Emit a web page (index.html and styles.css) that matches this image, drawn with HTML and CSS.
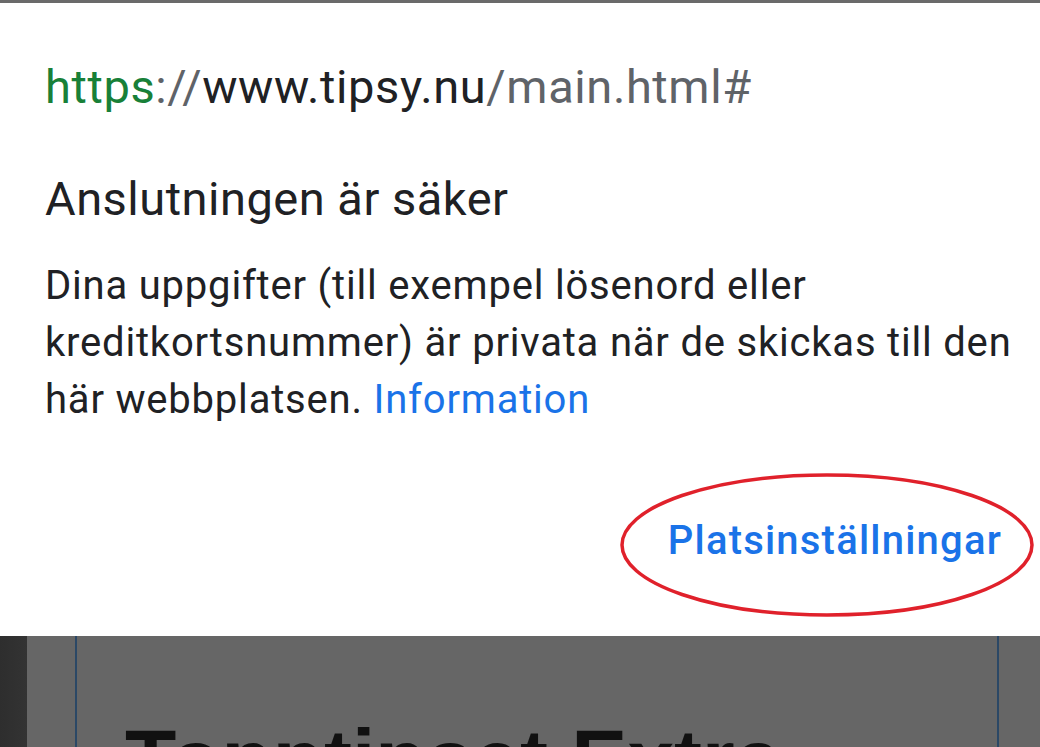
FILE: index.html
```html
<!DOCTYPE html>
<html lang="sv">
<head>
<meta charset="utf-8">
<title>Anslutningen är säker</title>
<link rel="stylesheet" href="styles.css">
</head>
<body>
<div class="topbar"></div>
<div class="dialog">
  <div class="url"><span class="scheme">https</span><span class="muted">://</span><span class="host">www.tipsy.nu</span><span class="muted">/main.html#</span></div>
  <h1 class="title">Anslutningen är säker</h1>
  <p class="desc">Dina uppgifter (till exempel lösenord eller kreditkortsnummer) är privata när de skickas till den här webbplatsen. <a class="link" href="#">Information</a></p>
  <div class="actions">
    <span class="settings">Platsinställningar
      <svg class="ring" width="416" height="146" viewBox="0 0 416 146"><ellipse cx="208" cy="73" rx="205" ry="70" fill="none" stroke="#e0212b" stroke-width="3.5"/></svg>
    </span>
  </div>
</div>
<div class="page">
  <div class="edge"></div>
  <div class="frame">
    <div class="headline">Topptipset Extra</div>
  </div>
</div>
</body>
</html>
```
FILE: styles.css
```css
html, body {
  margin: 0;
  padding: 0;
  background: #666666;
  overflow: hidden;
}
body {
  width: 1040px;
  height: 747px;
  font-family: Roboto, "Noto Sans", sans-serif;
}
.topbar {
  height: 3px;
  background: #6a6a6a;
}
.dialog {
  background: #ffffff;
  height: 633px;
  box-sizing: border-box;
  padding: 55px 20px 0 45px;
}
.url {
  font-size: 47px;
  letter-spacing: 0.6px;
  line-height: 58px;
  color: #202124;
  white-space: nowrap;
}
.scheme { color: #188038; }
.muted { color: #5f6368; }
.host { color: #202124; }
.title {
  margin: 54px 0 0 0;
  font-weight: 400;
  font-size: 47px;
  letter-spacing: 0.5px;
  line-height: 58px;
  color: #202124;
}
.desc {
  margin: 29px 0 0 0;
  font-size: 40px;
  letter-spacing: 0.8px;
  line-height: 57px;
  color: #202124;
}
.link {
  color: #1a73e8;
  text-decoration: none;
}
.actions {
  display: flex;
  justify-content: flex-end;
  margin-top: 89px;
}
.settings {
  position: relative;
  font-size: 40px;
  font-weight: 500;
  letter-spacing: 1.2px;
  line-height: 48px;
  color: #1a73e8;
  margin-right: 18px;
  white-space: nowrap;
}
.ring {
  position: absolute;
  left: -49px;
  top: -45px;
}
.page {
  display: flex;
  height: 111px;
  background: #666666;
}
.edge {
  width: 27px;
  background: linear-gradient(to right, #2e2e2e, #333333);
}
.frame {
  margin-left: 48px;
  width: 924px;
  border-left: 2px solid #2b4866;
  border-right: 2px solid #2b4866;
  padding: 81px 0 0 48px;
  box-sizing: border-box;
}
.headline {
  font-family: "Liberation Sans", Arial, sans-serif;
  font-weight: 700;
  font-size: 84px;
  line-height: 84px;
  color: #111111;
  white-space: nowrap;
}
```
